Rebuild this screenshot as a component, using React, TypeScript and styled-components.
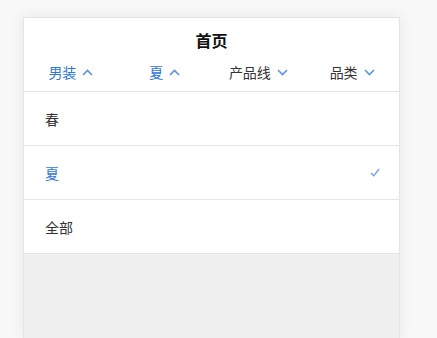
import styled, { createGlobalStyle } from "styled-components";

const GlobalStyle = createGlobalStyle`
  html, body {
    margin: 0;
    padding: 0;
    background: #f8f8f8;
    overflow: hidden;
  }
  body {
    font-family: "Noto Sans CJK SC", "Noto Sans", sans-serif;
  }
`;

const Page = styled.div`
  padding: 17px 0 0 23px;
  height: 338px;
  box-sizing: border-box;
  display: flex;
  flex-direction: column;
`;

const Phone = styled.div`
  flex: 1;
  width: 375px;
  background: #f0f0f0;
  border: 1px solid #e4e4e4;
  border-bottom: none;
  box-shadow: 0 0 14px rgba(0, 0, 0, 0.07);
  display: flex;
  flex-direction: column;
`;

const Header = styled.div`
  background: #fff;
  padding: 10px 0 8px;
  border-bottom: 1px solid #e5e5e5;
`;

const Title = styled.div`
  text-align: center;
  font-size: 16px;
  font-weight: 700;
  line-height: 24px;
  color: #111;
`;

const Tabs = styled.div`
  display: flex;
  margin-top: 9px;
`;

const Tab = styled.div<{ $active?: boolean }>`
  flex: 1;
  display: flex;
  align-items: center;
  justify-content: center;
  gap: 6px;
  font-size: 14px;
  line-height: 22px;
  color: ${(p) => (p.$active ? "#2f76dc" : "#333")};
`;

const Menu = styled.div`
  background: #fff;
`;

const Option = styled.div<{ $active?: boolean }>`
  height: 53px;
  display: flex;
  align-items: center;
  justify-content: space-between;
  padding: 0 19px 0 21px;
  font-size: 14px;
  color: ${(p) => (p.$active ? "#2f76dc" : "#333")};
  border-bottom: 1px solid #e5e5e5;
`;

const Chevron = ({ up }: { up?: boolean }) => (
  <svg width="11" height="7" viewBox="0 0 11 7">
    <path
      d={up ? "M1 6 L5.5 1.5 L10 6" : "M1 1 L5.5 5.5 L10 1"}
      fill="none"
      stroke="#5a92ea"
      strokeWidth="1.6"
    />
  </svg>
);

const Check = () => (
  <svg width="10" height="9" viewBox="0 0 10 9">
    <path d="M1 5 L3.8 7.8 L9 1" fill="none" stroke="#6d9cf0" strokeWidth="1.3" />
  </svg>
);

const tabs = [
  { label: "男装", active: true },
  { label: "夏", active: true },
  { label: "产品线", active: false },
  { label: "品类", active: false },
];

const options = [
  { label: "春", active: false },
  { label: "夏", active: true },
  { label: "全部", active: false },
];

export default function App() {
  return (
    <>
      <GlobalStyle />
      <Page>
        <Phone>
          <Header>
            <Title>首页</Title>
            <Tabs>
              {tabs.map((t) => (
                <Tab key={t.label} $active={t.active}>
                  {t.label}
                  <Chevron up={t.active} />
                </Tab>
              ))}
            </Tabs>
          </Header>
          <Menu>
            {options.map((o) => (
              <Option key={o.label} $active={o.active}>
                {o.label}
                {o.active && <Check />}
              </Option>
            ))}
          </Menu>
        </Phone>
      </Page>
    </>
  );
}
